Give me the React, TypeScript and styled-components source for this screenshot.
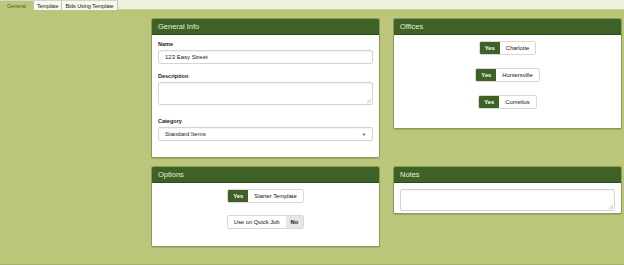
import React from 'react'
import styled, { createGlobalStyle } from 'styled-components'

const GlobalStyle = createGlobalStyle`
   html, body {
      margin: 0;
      padding: 0;
      background: #bcc67b;
      font-family: "Liberation Sans", Arial, sans-serif;
   }
`

const Page = styled.div`
   width: 624px;
   height: 265px;
   display: flex;
   flex-direction: column;
   overflow: hidden;
   background: #bcc67b;
   border-bottom: 1px solid #a7b16c;
   box-sizing: border-box;
`

const TabBar = styled.div`
   display: flex;
   height: 10px;
   background: #edf0dd;
   border-bottom: 1px solid #c9d195;
   box-sizing: border-box;
`

const Tab = styled.div<{ $active?: boolean }>`
   display: flex;
   align-items: center;
   padding: 0 ${p => (p.$active ? '7px' : '3px')};
   font-size: 5.5px;
   color: ${p => (p.$active ? '#4d6a26' : '#222')};
   background: ${p => (p.$active ? '#bcc67b' : '#f7f8f0')};
   border-right: 1px solid #c4c4b8;
   border-top: 1px solid #d6d6cc;
   box-sizing: border-box;
   height: 10px;
   letter-spacing: -0.1px;
`

const Content = styled.div`
   flex: 1;
   display: grid;
   grid-template-columns: 229px 229px;
   column-gap: 13px;
   row-gap: 8px;
   align-items: start;
   align-content: start;
   padding: 8px 0 0 151px;
`

const Panel = styled.div`
   background: #fff;
   border: 1px solid #8a9b5c;
   border-radius: 2px;
   box-shadow: 0 1px 1px rgba(0, 0, 0, 0.15);
   overflow: hidden;
`

const Header = styled.div`
   height: 15px;
   display: flex;
   align-items: center;
   padding: 0 6px;
   background: #3e6225;
   color: #e8eedc;
   font-size: 7.5px;
   border-bottom: 1px solid #2f4c1c;
`

const Body = styled.div<{ $pad?: string }>`
   padding: ${p => p.$pad || '6px'};
`

const Field = styled.div<{ $mb?: number }>`
   margin-bottom: ${p => (p.$mb === undefined ? 9 : p.$mb)}px;
`

const Label = styled.div`
   font-size: 5.5px;
   font-weight: bold;
   color: #222;
   margin-bottom: 3px;
`

const Input = styled.div`
   height: 14px;
   border: 1px solid #d4d4d4;
   border-radius: 2px;
   box-sizing: border-box;
   padding: 0 6px;
   display: flex;
   align-items: center;
   justify-content: space-between;
   font-size: 6px;
   color: #222;
   box-shadow: inset 0 1px 1px rgba(0, 0, 0, 0.05);
`

const TextArea = styled.div<{ $h: number }>`
   position: relative;
   height: ${p => p.$h}px;
   border: 1px solid #d4d4d4;
   border-radius: 2px;
   box-sizing: border-box;
   box-shadow: inset 0 1px 1px rgba(0, 0, 0, 0.05);
`

const Grip = styled.svg`
   position: absolute;
   right: 1px;
   bottom: 1px;
`

const Caret = styled.span`
   font-size: 4px;
   color: #333;
`

const Stack = styled.div<{ $gap: number }>`
   display: flex;
   flex-direction: column;
   align-items: center;
   gap: ${p => p.$gap}px;
`

const Group = styled.div`
   display: inline-flex;
   height: 14px;
   border: 1px solid #d8d8d8;
   border-radius: 2px;
   box-sizing: border-box;
   overflow: hidden;
`

const Seg = styled.div<{ $kind?: 'on' | 'off' }>`
   display: flex;
   align-items: center;
   padding: 0 ${p => (p.$kind ? '5px' : '6px')};
   font-size: 5.8px;
   font-weight: ${p => (p.$kind ? 'bold' : 'normal')};
   color: ${p => (p.$kind === 'on' ? '#fff' : '#111')};
   background: ${p =>
      p.$kind === 'on' ? '#3e6225' : p.$kind === 'off' ? '#e6e6e6' : '#fff'};
`

const Resize = () => (
   <Grip width="4" height="4" viewBox="0 0 4 4">
      <path d="M4 0L0 4M4 2L2 4" stroke="#999" strokeWidth="0.6" />
   </Grip>
)

const offices = ['Charlotte', 'Huntersville', 'Cornelius']

export default function App() {
   return (
      <Page>
         <GlobalStyle />
         <TabBar>
            <Tab $active>General</Tab>
            <Tab>Template</Tab>
            <Tab>Bids Using Template</Tab>
         </TabBar>
         <Content>
            <Panel>
               <Header>General Info</Header>
               <Body $pad="6px 6px 16px">
                  <Field>
                     <Label>Name</Label>
                     <Input>123 Easy Street</Input>
                  </Field>
                  <Field $mb={13}>
                     <Label>Description</Label>
                     <TextArea $h={23}>
                        <Resize />
                     </TextArea>
                  </Field>
                  <Field $mb={0}>
                     <Label>Category</Label>
                     <Input>
                        Standard Items
                        <Caret>▼</Caret>
                     </Input>
                  </Field>
               </Body>
            </Panel>
            <Panel>
               <Header>Offices</Header>
               <Body $pad="6px 6px 19px">
                  <Stack $gap={13}>
                     {offices.map(o => (
                        <Group key={o}>
                           <Seg $kind="on">Yes</Seg>
                           <Seg>{o}</Seg>
                        </Group>
                     ))}
                  </Stack>
               </Body>
            </Panel>
            <Panel>
               <Header>Options</Header>
               <Body $pad="6px 6px 17px">
                  <Stack $gap={12}>
                     <Group>
                        <Seg $kind="on">Yes</Seg>
                        <Seg>Starter Template</Seg>
                     </Group>
                     <Group>
                        <Seg>Use on Quick Job</Seg>
                        <Seg $kind="off">No</Seg>
                     </Group>
                  </Stack>
               </Body>
            </Panel>
            <Panel>
               <Header>Notes</Header>
               <Body $pad="6px 6px 2px">
                  <TextArea $h={22}>
                     <Resize />
                  </TextArea>
               </Body>
            </Panel>
         </Content>
      </Page>
   )
}
